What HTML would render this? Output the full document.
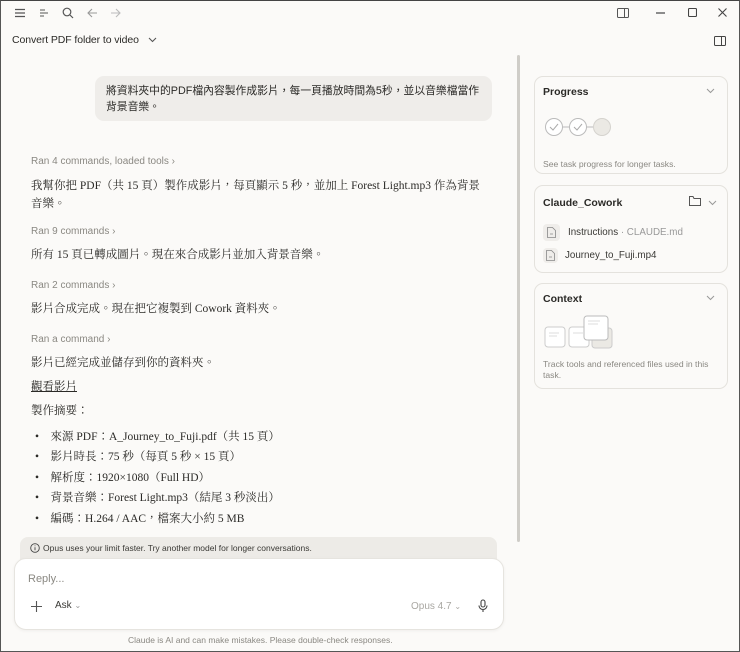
<!DOCTYPE html>
<html><head><meta charset="utf-8"><style>
*{margin:0;padding:0;box-sizing:border-box}
body{width:740px;height:652px;background:#fbfaf8;position:relative;overflow:hidden;font-family:"Liberation Sans","Noto Sans CJK TC",sans-serif;color:#2b2a27}
.frame{position:absolute;inset:0;border:1px solid #555;border-top:1px solid #444;pointer-events:none;z-index:10}
.a{position:absolute;white-space:nowrap}
.ser{font-family:"Liberation Serif","Noto Serif CJK TC",serif;font-size:11.5px;color:#2b2a27}
.ran{font-size:10px;color:#8a8882}
.card{position:absolute;left:534px;width:194px;background:#fbfaf8;border:1px solid #e4e2dd;border-radius:9px}
.ct{position:absolute;left:8px;font-size:10.5px;font-weight:bold;color:#2b2a27}
.sm{font-size:8.6px;color:#8a8882}
svg{position:absolute}
</style></head><body>
<div class="frame"></div>
<svg style="left:14px;top:8px" width="12" height="10" viewBox="0 0 12 10" fill="none" stroke="#555" stroke-width="1.2"><path d="M1 1.5h10M1 5h10M1 8.5h10"/></svg>
<svg style="left:39px;top:8px" width="10" height="10" viewBox="0 0 10 10" fill="none" stroke="#555" stroke-width="1.1"><path d="M1 2h5M1 5h8M1 8h4"/></svg>
<svg style="left:62px;top:7px" width="12" height="12" viewBox="0 0 12 12" fill="none" stroke="#555" stroke-width="1.2"><circle cx="5" cy="5" r="3.8"/><path d="M8 8l3 3"/></svg>
<svg style="left:87px;top:8px" width="11" height="10" viewBox="0 0 11 10" fill="none" stroke="#999" stroke-width="1.1"><path d="M10 5H1M5 1L1 5l4 4"/></svg>
<svg style="left:110px;top:8px" width="11" height="10" viewBox="0 0 11 10" fill="none" stroke="#bbb" stroke-width="1.1"><path d="M1 5h9M6 1l4 4-4 4"/></svg>
<svg style="left:617px;top:8px" width="12" height="10" viewBox="0 0 12 10" fill="none" stroke="#555" stroke-width="1"><rect x=".5" y=".5" width="11" height="9" rx="1"/><path d="M7.5 .5v9"/></svg>
<svg style="left:656px;top:12px" width="9" height="2"><path d="M0 1h9" stroke="#444" stroke-width="1.2"/></svg>
<svg style="left:688px;top:8px" width="9" height="9" viewBox="0 0 9 9" fill="none" stroke="#444" stroke-width="1.1"><rect x=".5" y=".5" width="8" height="8" rx="1"/></svg>
<svg style="left:718px;top:8px" width="9" height="9" viewBox="0 0 9 9" fill="none" stroke="#444" stroke-width="1.1"><path d="M.5 .5l8 8M8.5 .5l-8 8"/></svg>
<div class="a" style="left:12px;top:34px;font-size:10.5px;color:#2b2a27;letter-spacing:-0.1px">Convert PDF folder to video</div>
<svg style="left:148px;top:37px" width="9" height="6" viewBox="0 0 9 6" fill="none" stroke="#555" stroke-width="1.1"><path d="M1 1l3.5 3.5L8 1"/></svg>
<svg style="left:714px;top:36px" width="12" height="10" viewBox="0 0 12 10" fill="none" stroke="#444" stroke-width="1"><rect x=".5" y=".5" width="11" height="9" rx="1"/><path d="M7.5 .5v9"/></svg>
<div class="a" style="left:517px;top:55px;width:3px;height:487px;background:#cfcdc8;border-radius:2px"></div>
<div class="a" style="left:95px;top:76px;width:397px;height:45px;background:#efedea;border-radius:9px;padding:7px 0 0 11px;font-size:10.8px;line-height:16px;white-space:nowrap;color:#2b2a27">將資料夾中的PDF檔內容製作成影片，每一頁播放時間為5秒，並以音樂檔當作<br>背景音樂。</div>
<div class="a ran" style="left:31px;top:156px">Ran 4 commands, loaded tools ›</div>
<div class="a ser" style="left:31px;top:177px;line-height:18px">我幫你把 PDF（共 15 頁）製作成影片，每頁顯示 5 秒，並加上 Forest Light.mp3 作為背景<br>音樂。</div>
<div class="a ran" style="left:31px;top:226px">Ran 9 commands ›</div>
<div class="a ser" style="left:31px;top:246px">所有 15 頁已轉成圖片。現在來合成影片並加入背景音樂。</div>
<div class="a ran" style="left:31px;top:280px">Ran 2 commands ›</div>
<div class="a ser" style="left:31px;top:300px">影片合成完成。現在把它複製到 Cowork 資料夾。</div>
<div class="a ran" style="left:31px;top:334px">Ran a command ›</div>
<div class="a ser" style="left:31px;top:354px">影片已經完成並儲存到你的資料夾。</div>
<div class="a ser" style="left:31px;top:378px;text-decoration:underline">觀看影片</div>
<div class="a ser" style="left:31px;top:402px">製作摘要：</div>
<div class="a ser" style="left:35px;top:428px">•&nbsp;&nbsp;&nbsp;&nbsp;來源 PDF：A_Journey_to_Fuji.pdf（共 15 頁）</div>
<div class="a ser" style="left:35px;top:448px">•&nbsp;&nbsp;&nbsp;&nbsp;影片時長：75 秒（每頁 5 秒 × 15 頁）</div>
<div class="a ser" style="left:35px;top:469px">•&nbsp;&nbsp;&nbsp;&nbsp;解析度：1920×1080（Full HD）</div>
<div class="a ser" style="left:35px;top:489px">•&nbsp;&nbsp;&nbsp;&nbsp;背景音樂：Forest Light.mp3（結尾 3 秒淡出）</div>
<div class="a ser" style="left:35px;top:510px">•&nbsp;&nbsp;&nbsp;&nbsp;編碼：H.264 / AAC，檔案大小約 5 MB</div>
<div class="a" style="left:20px;top:537px;width:477px;height:32px;background:#edebe7;border-radius:8px"></div>
<svg style="left:30px;top:543px" width="10" height="10" viewBox="0 0 10 10" fill="none" stroke="#444" stroke-width=".9"><circle cx="5" cy="5" r="4.3"/><path d="M5 4.3v3M5 2.5v.8"/></svg>
<div class="a" style="left:43px;top:543px;font-size:8.5px;color:#3a3935">Opus uses your limit faster. Try another model for longer conversations.</div>
<div class="a" style="left:14px;top:558px;width:490px;height:72px;background:#fff;border:1px solid #e6e4df;border-radius:12px;box-shadow:0 1px 3px rgba(0,0,0,.05)"></div>
<div class="a" style="left:28px;top:573px;font-size:11px;color:#8a8882">Reply...</div>
<svg style="left:31px;top:601px" width="11" height="11" viewBox="0 0 11 11" fill="none" stroke="#555" stroke-width="1.1"><path d="M5.5 0v11M0 5.5h11"/></svg>
<div class="a" style="left:55px;top:600px;font-size:10px;color:#3a3935">Ask <span style="color:#999;font-size:8px">⌄</span></div>
<div class="a" style="left:411px;top:601px;font-size:10px;color:#a9a7a2">Opus 4.7 <span style="font-size:8px">⌄</span></div>
<svg style="left:478px;top:599px" width="10" height="14" viewBox="0 0 10 14" fill="none" stroke="#444" stroke-width="1.1"><rect x="3" y="1" width="4" height="7" rx="2"/><path d="M1 6.5a4 4 0 0 0 8 0M5 10.5v2.5"/></svg>
<div class="a" style="left:128px;top:635px;font-size:8.5px;color:#8a8882">Claude is AI and can make mistakes. Please double-check responses.</div>
<div class="card" style="top:76px;height:98px">
<div class="ct" style="top:9px">Progress</div>
<svg style="left:171px;top:11px" width="9" height="6" viewBox="0 0 9 6" fill="none" stroke="#999" stroke-width="1"><path d="M1 1l3.5 3.5L8 1"/></svg>
<svg style="left:9px;top:40px" width="72" height="20" viewBox="0 0 72 20" fill="none"><circle cx="10" cy="10" r="8.5" fill="#fff" stroke="#bbb"/><path d="M6 10l3 3 5-6" stroke="#aaa"/><path d="M19 10h6" stroke="#bbb"/><circle cx="34" cy="10" r="8.5" fill="#fff" stroke="#bbb"/><path d="M30 10l3 3 5-6" stroke="#aaa"/><path d="M43 10h6" stroke="#bbb"/><circle cx="58" cy="10" r="8.5" fill="#ebe9e4" stroke="#d5d3ce"/></svg>
<div class="a sm" style="left:8px;top:82px">See task progress for longer tasks.</div>
</div>
<div class="card" style="top:185px;height:88px">
<div class="ct" style="top:11px">Claude_Cowork</div>
<svg style="left:154px;top:10px" width="12" height="10" viewBox="0 0 12 10" fill="none" stroke="#555" stroke-width="1"><path d="M.5 1.5v8h11v-7H5L4 .5H.5z"/></svg>
<svg style="left:173px;top:14px" width="9" height="6" viewBox="0 0 9 6" fill="none" stroke="#999" stroke-width="1"><path d="M1 1l3.5 3.5L8 1"/></svg>
<div class="a" style="left:8px;top:38px;width:17px;height:17px;background:#efedea;border-radius:4px"></div>
<svg style="left:12px;top:41px" width="9" height="11" viewBox="0 0 9 11" fill="none" stroke="#888" stroke-width=".8"><path d="M.5.5h5l3 3v7h-8z M3 7h3"/></svg>
<div class="a" style="left:33px;top:41px;font-size:9.8px;color:#3a3935">Instructions <span style="color:#999">· CLAUDE.md</span></div>
<div class="a" style="left:8px;top:62px;width:15px;height:15px;background:#efedea;border-radius:4px"></div>
<svg style="left:11px;top:64px" width="9" height="11" viewBox="0 0 9 11" fill="none" stroke="#888" stroke-width=".8"><path d="M.5.5h5l3 3v7h-8z M3 7h3"/></svg>
<div class="a" style="left:30px;top:64px;font-size:9.8px;color:#3a3935">Journey_to_Fuji.mp4</div>
</div>
<div class="card" style="top:283px;height:106px">
<div class="ct" style="top:9px">Context</div>
<svg style="left:171px;top:11px" width="9" height="6" viewBox="0 0 9 6" fill="none" stroke="#999" stroke-width="1"><path d="M1 1l3.5 3.5L8 1"/></svg>
<svg style="left:9px;top:30px" width="72" height="36" viewBox="0 0 72 36"><rect x="1" y="13" width="20" height="20" rx="3" fill="#fff" stroke="#ccc"/><rect x="25" y="13" width="20" height="20" rx="3" fill="#fff" stroke="#ccc"/><rect x="48" y="14" width="20" height="20" rx="3" fill="#ebe9e4" stroke="#ccc"/><rect x="40" y="2" width="24" height="24" rx="3" fill="#fff" stroke="#bbb"/><path d="M5 19h10M5 22h8M29 19h10M44 7h12M44 10h10" stroke="#ddd"/></svg>
<div class="a sm" style="left:8px;top:75px;line-height:11px">Track tools and referenced files used in this<br>task.</div>
</div>
</body></html>
